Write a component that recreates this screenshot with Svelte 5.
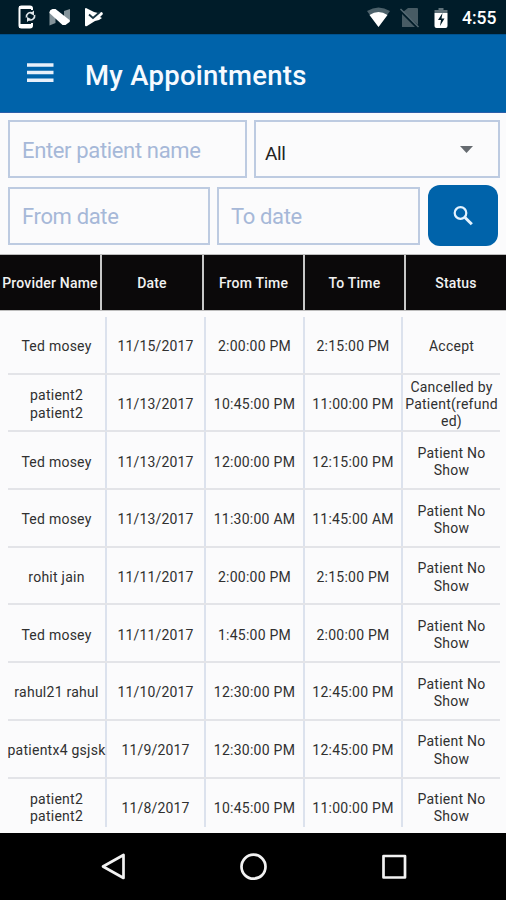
<script>
  const headings = ['Provider Name', 'Date', 'From Time', 'To Time', 'Status'];
  const noShow = ['Patient No', 'Show'];
  const appointments = [
    [['Ted mosey'], '11/15/2017', '2:00:00 PM', '2:15:00 PM', ['Accept']],
    [['patient2', 'patient2'], '11/13/2017', '10:45:00 PM', '11:00:00 PM', ['Cancelled by', 'Patient(refund', 'ed)']],
    [['Ted mosey'], '11/13/2017', '12:00:00 PM', '12:15:00 PM', noShow],
    [['Ted mosey'], '11/13/2017', '11:30:00 AM', '11:45:00 AM', noShow],
    [['rohit jain'], '11/11/2017', '2:00:00 PM', '2:15:00 PM', noShow],
    [['Ted mosey'], '11/11/2017', '1:45:00 PM', '2:00:00 PM', noShow],
    [['rahul21 rahul'], '11/10/2017', '12:30:00 PM', '12:45:00 PM', noShow],
    [['patientx4 gsjsk'], '11/9/2017', '12:30:00 PM', '12:45:00 PM', noShow],
    [['patient2', 'patient2'], '11/8/2017', '10:45:00 PM', '11:00:00 PM', noShow]
  ];
</script>

<div class="screen">
  <div class="status">
    <svg class="left" width="110" height="34" viewBox="0 0 110 34">
      <path d="M32 10V8.500q0-2-2-2h-8.500q-2 0-2 2v17q0 2 2 2H30q2 0 2-2V23" fill="none" stroke="#fff" stroke-width="2"/>
      <path d="M19 6h13v3H19zM19 24h13v4H19z" fill="#fff"/>
      <path d="M26.500 17.500a4.200 4.200 0 0 1 6-4.500M34.600 15a4.200 4.200 0 0 1-6 4.500" fill="none" stroke="#dfe6ea" stroke-width="1.700"/>
      <path d="M34 10.500v5l-4-2zM27 22v-5l4 2z" fill="#dfe6ea"/>
      <path d="M49.500 12l6 4v7l-6 2.500zM70 9v12l-6-4v-6z" fill="#84939a"/>
      <path d="M49.500 12q0-2 3-3h3l14 11q1 1 0 2l-4 3h-3L49.500 13z" fill="#fff"/>
      <path d="M86 8l8 4 4 1 4-1 1 2-3 3 2 1-3 2-4 1-8 5q-2 1-2-1V9q0-1 1-1z" fill="#fff"/>
      <path d="M89 14.500l4 3.500 7-6" fill="none" stroke="#173441" stroke-width="1.800"/>
    </svg>
    <svg class="right" width="90" height="34" viewBox="0 0 90 34">
      <path d="M1 11q11.500-7 23 0L12.500 27z" fill="#4d626b"/>
      <path d="M3.500 15q9-6 18 0l-9 12z" fill="#fff"/>
      <path d="M42 8h9q1 0 1 1v16L37 12zM36 14l13 13H36z" fill="#475b64"/>
      <path d="M34.500 9l18 18" stroke="#566b74" stroke-width="1.500"/>
      <path d="M72.500 8h5v2h4v3h-13v-3h4z" fill="#61737b"/>
      <path d="M68.500 13h13v13q0 2-2 2h-9q-2 0-2-2z" fill="#fff"/>
      <path d="M76.500 13l-4.500 7h3l-1 6 4.500-7.500h-3z" fill="#001c29"/>
    </svg>
    <span class="clock">4:55</span>
  </div>

  <header class="appbar">
    <svg width="27" height="20" viewBox="0 0 27 20"><path d="M0 2h26.500M0 9.500h26.500M0 17.300h26.500" stroke="#e8f0fa" stroke-width="3.400"/></svg>
    <h1>My Appointments</h1>
  </header>

  <div class="filters">
    <div class="line top">
      <div class="field name">Enter patient name</div>
      <div class="field select"><span>All</span><svg width="13" height="7" viewBox="0 0 13 7"><path d="M0 0h13L6.500 7z" fill="#666b70"/></svg></div>
    </div>
    <div class="line">
      <div class="field from">From date</div>
      <div class="field to">To date</div>
      <button aria-label="Search"><svg width="20" height="20" viewBox="0 0 20 20" fill="none" stroke="#e4f3ff"><circle cx="7.500" cy="7" r="5.800" stroke-width="2.200"/><path d="M12 11.500l6.800 6.800" stroke-width="3"/></svg></button>
    </div>
  </div>

  <div class="headings">
    {#each headings as heading}<div>{heading}</div>{/each}
  </div>

  <div class="table">
    {#each appointments as [provider, date, from, to, status]}
      <div class="row">
        <div class="cell">{#each provider as part}<span>{part}</span>{/each}</div>
        <div class="cell date"><span>{date}</span></div>
        <div class="cell"><span>{from}</span></div>
        <div class="cell"><span>{to}</span></div>
        <div class="cell">{#each status as part}<span>{part}</span>{/each}</div>
      </div>
    {/each}
  </div>

  <nav>
    <svg width="506" height="67" viewBox="0 0 506 67" fill="none" stroke="#f2f2f2" stroke-width="2.700" stroke-linejoin="round">
      <path d="M123.500 22v23L103 33.500z"/>
      <circle cx="253.500" cy="33.700" r="12"/>
      <rect x="383.500" y="23" width="21.500" height="21.500"/>
    </svg>
  </nav>
</div>

<style>
  .screen { width: 506px; height: 900px; overflow: hidden; display: flex; flex-direction: column; background: #fbfbfc; font-family: Roboto, sans-serif; color: #303030; }
  .status { height: 34px; flex: none; display: flex; align-items: center; background: #001c29; }
  .right { margin-left: 256px; }
  .clock { margin-left: 6px; width: 40px; color: #fff; font-size: 17.5px; font-weight: 500; line-height: 34px; padding-top: 2px; }
  .appbar { height: 79px; flex: none; box-sizing: border-box; display: flex; align-items: center; padding-left: 27px; background: #0063aa; border-bottom: 1px solid #2b5fa9; border-top: 1px solid #00528f; }
  .appbar svg { margin-top: -2px; }
  h1 { margin: 3px 0 0 31px; font-size: 27.5px; font-weight: 500; letter-spacing: .27px; color: #f6faff; white-space: nowrap; }
  .filters { height: 141px; flex: none; padding: 7px 6px 0 8px; box-sizing: border-box; }
  .line { display: flex; height: 61px; align-items: center; gap: 7px; }
  .line.top { height: 58px; margin-bottom: 7px; }
  .field { box-sizing: border-box; height: 58px; border: 2px solid #bdcbe1; padding: 2px 0 0 12px; color: #a6b8d8; font-size: 22px; letter-spacing: -.35px; display: flex; align-items: center; white-space: nowrap; }
  .name { width: 239px; }
  .select { width: 246px; color: #222; padding: 8px 25px 0 9px; font-size: 19px; justify-content: space-between; }
  .select svg { margin-top: -8px; }
  .from { width: 202px; }
  .to { width: 203px; }
  button { width: 70px; height: 61px; padding: 0; margin-left: 1px; border: 0; border-radius: 12px; background: #0063aa; display: flex; align-items: center; justify-content: center; }
  .headings { height: 57px; flex: none; box-sizing: border-box; display: grid; grid-template-columns: 102px 102px 101px 101px 100px; border: solid #bdbdbd; border-width: 1px 0; }
  .headings div { display: flex; align-items: center; justify-content: center; box-sizing: border-box; background: #0b090a; color: #f1f1f1; font-size: 14px; font-weight: 500; letter-spacing: .2px; white-space: nowrap; border-right: 2px solid #c8c8c8; }
  .headings div:last-child { border: 0; }
  .table { height: 510px; flex: none; margin: 6px 6px 6px 8px; overflow: hidden; box-sizing: border-box; }
  .row { display: grid; grid-template-columns: 99px 99px 99px 98px 97px; height: 57.7px; box-sizing: border-box; border-bottom: 2px solid #e3e4e8; }
  .cell { display: flex; flex-direction: column; align-items: center; justify-content: center; box-sizing: border-box; border-right: 2px solid #dce2ed; font-size: 14px; line-height: 17.3px; white-space: nowrap; padding-top: 4px; letter-spacing: .25px; }
  .date { letter-spacing: .15px; }
  .cell:last-child { border: 0; }
  nav { flex: 1; background: #000; }
  nav svg { display: block; }
</style>
